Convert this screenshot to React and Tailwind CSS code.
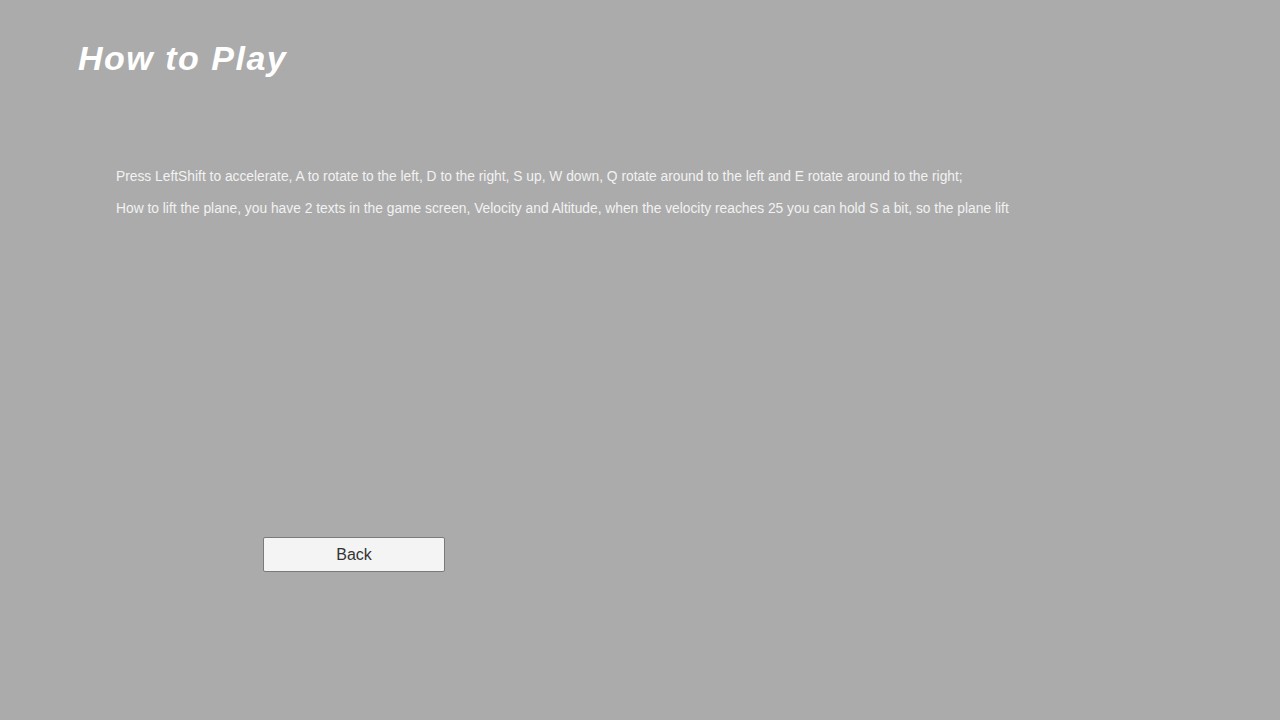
import React from "react";

function App() {
  return (
    <div
      className="w-[1280px] h-[720px] bg-[#ababab] flex flex-col"
      style={{ fontFamily: '"Liberation Sans", Arial, sans-serif' }}
    >
      <h1 className="ml-[78px] mt-[38px] h-[40px] text-[34px] leading-[40px] font-bold italic tracking-[1.5px] text-white">
        How to Play
      </h1>

      {/* controls */}
      <div className="ml-[116px] mt-[90px] flex flex-col gap-[14px] text-[13.8px] leading-[18px] text-[#f2f2f2]">
        <p>
          Press LeftShift to accelerate, A to rotate to the left, D to the right, S up, W down, Q rotate around to the left and E rotate around to the right;
        </p>
        <p>
          How to lift the plane, you have 2 texts in the game screen, Velocity and Altitude, when the velocity reaches 25 you can hold S a bit, so the plane lift
        </p>
      </div>

      <button className="ml-[263px] mt-[319px] w-[182px] h-[35px] bg-[#f4f4f4] border border-[#7a7a7a] rounded-[2px] text-[16px] text-[#333333]">
        Back
      </button>
    </div>
  );
}

export default App;
